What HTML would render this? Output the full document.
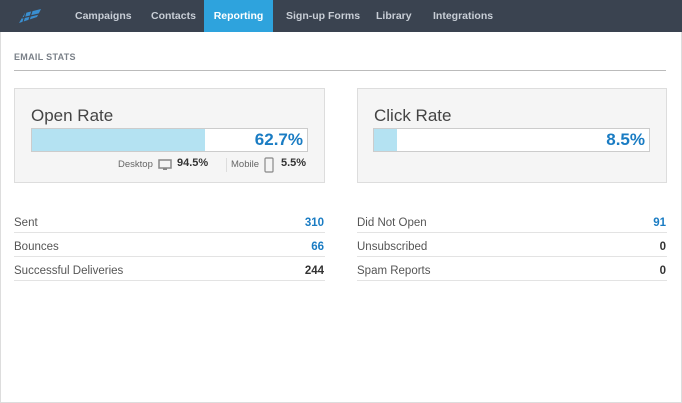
<!DOCTYPE html><html><head><style>
body{margin:0;width:682px;height:403px;background:#fff;font-family:"Liberation Sans",sans-serif;position:relative;overflow:hidden}
.nav{position:absolute;left:0;top:0;width:682px;height:32px;background:#3a4350}
.nav span{position:absolute;top:0;height:32px;line-height:33px;font-size:10.5px;font-weight:bold;color:#c8ced6}
.frame{position:absolute;left:0;top:32px;width:680px;height:370px;border:1px solid #ddd;border-top:none}
.h{position:absolute;left:14px;top:52px;font-size:9px;font-weight:bold;color:#7a8088;letter-spacing:.3px}
.hl{position:absolute;left:14px;top:70px;width:652px;height:1px;background:#bbb}
.card{position:absolute;top:88px;width:311px;height:95px;background:#f5f5f5;border:1px solid #ddd;box-sizing:border-box}
.t{position:absolute;left:16px;top:17px;font-size:17px;color:#444}
.bar{position:absolute;left:16px;top:39px;width:277px;height:24px;background:#fff;border:1px solid #ccc;box-sizing:border-box}
.fill{position:absolute;left:0;top:0;bottom:0;background:#b4e2f2}
.pct{position:absolute;right:4px;top:1px;font-size:17px;font-weight:bold;color:#1a7cc3}
.sub{position:absolute;top:70px;font-size:9.5px;color:#666}
.sb{position:absolute;top:68px;font-size:11px;font-weight:bold;color:#333}
.row{position:absolute;width:311px;height:24px;border-bottom:1px solid #e3e3e3;font-size:11.5px;color:#555;box-sizing:border-box;line-height:28px}
.row b{position:absolute;right:1px;top:0}
</style></head><body>
<div class="nav">
<svg style="position:absolute;left:17px;top:8px" width="26" height="16" viewBox="0 0 26 16"><path d="M2 15 L8 5 L24 1 L20 9 Z" fill="#3a8fd0"/><path d="M5 10 L22 6 M9 4 L6 14 M15 3 L12 12" stroke="#3a4350" stroke-width="1.2"/></svg>
<span style="left:75px">Campaigns</span><span style="left:151px">Contacts</span>
<span style="left:204px;width:69px;background:#2ea3dd;color:#fff;text-align:center">Reporting</span>
<span style="left:286px">Sign-up Forms</span><span style="left:376px">Library</span><span style="left:433px">Integrations</span>
</div>
<div class="frame"></div>
<div class="h">EMAIL STATS</div><div class="hl"></div>
<div class="card" style="left:14px"><div class="t">Open Rate</div>
<div class="bar"><div class="fill" style="width:173px"></div><div class="pct">62.7%</div></div>
<div class="sub" style="left:103px">Desktop</div>
<svg style="position:absolute;left:143px;top:70px" width="14" height="12"><rect x="1" y="1" width="12" height="8" fill="none" stroke="#888" stroke-width="1.5"/><rect x="5" y="9" width="4" height="2" fill="#888"/></svg>
<div class="sb" style="left:162px">94.5%</div>
<div style="position:absolute;left:211px;top:69px;width:1px;height:14px;background:#ddd"></div>
<div class="sub" style="left:216px">Mobile</div>
<svg style="position:absolute;left:249px;top:68px" width="10" height="16"><rect x="1" y="1" width="8" height="14" rx="1" fill="none" stroke="#888" stroke-width="1.2"/></svg>
<div class="sb" style="left:266px">5.5%</div>
</div>
<div class="card" style="left:357px;width:310px"><div class="t">Click Rate</div>
<div class="bar" style="left:15px"><div class="fill" style="width:23px"></div><div class="pct">8.5%</div></div></div>
<div class="row" style="left:14px;top:209px">Sent<b style="color:#1a7cc3">310</b></div>
<div class="row" style="left:14px;top:233px">Bounces<b style="color:#1a7cc3">66</b></div>
<div class="row" style="left:14px;top:257px">Successful Deliveries<b style="color:#333">244</b></div>
<div class="row" style="left:357px;top:209px;width:310px">Did Not Open<b style="color:#1a7cc3">91</b></div>
<div class="row" style="left:357px;top:233px;width:310px">Unsubscribed<b style="color:#333">0</b></div>
<div class="row" style="left:357px;top:257px;width:310px">Spam Reports<b style="color:#333">0</b></div>
</body></html>
